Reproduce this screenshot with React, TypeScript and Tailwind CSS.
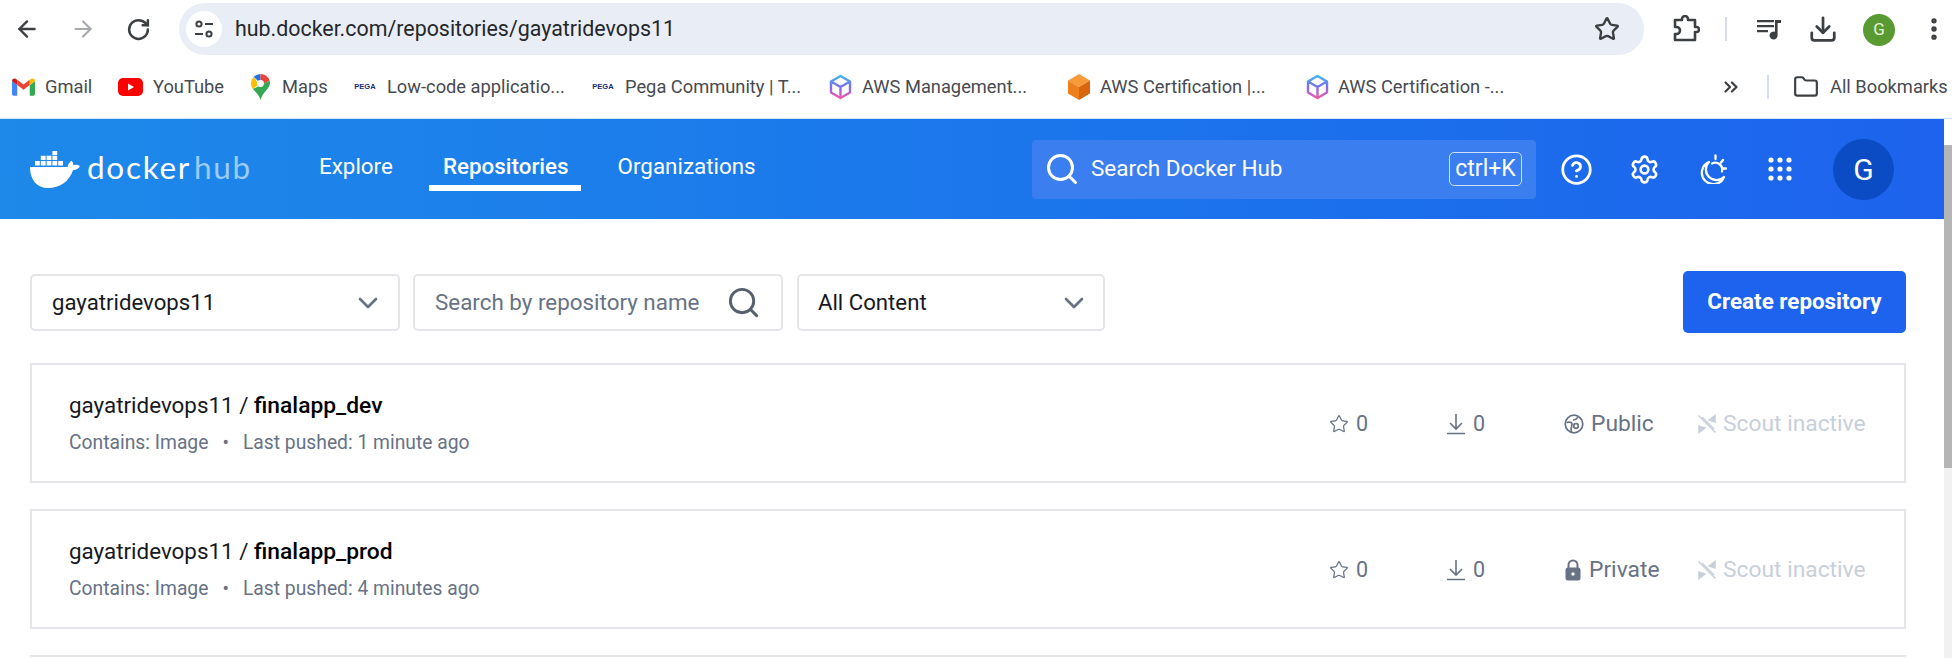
import React from "react";
import { ArrowLeft, ArrowRight, RotateCw, Star, Download, MoreVertical, ChevronDown, ChevronsRight, Folder, Search, CircleHelp, Settings } from "lucide-react";

const Gmail = () => (
  <svg width="23" height="18" viewBox="0 0 24 18" className="shrink-0">
    <path d="M1.6 18A1.6 1.6 0 0 1 0 16.4V3l5.5 3.8V18z" fill="#4285f4" />
    <path d="M18.5 18V6.8L24 3v13.4a1.6 1.6 0 0 1-1.6 1.6z" fill="#34a853" />
    <path d="M18.5 1.5 12 6.5 5.5 1.5v5.3L12 11.8l6.5-5z" fill="#ea4335" />
    <path d="M0 3V2.4C0 .4 2.3-.7 3.9.5L5.5 1.7v5.1z" fill="#c5221f" />
    <path d="M18.5 6.8V1.700L20.100.5C21.700-.7 24 .4 24 2.400V3z" fill="#fbbc04" />
  </svg>
);
const Youtube = () => (
  <svg width="25" height="18" viewBox="0 0 25 18" className="shrink-0">
    <rect width="25" height="18" rx="5" fill="#f00" />
    <path d="M10 5.500v7l6-3.500z" fill="#fff" />
  </svg>
);
const Maps = () => (
  <svg width="19" height="26" viewBox="0 0 19 26" className="shrink-0">
    <path d="M9.500 0A9.500 9.500 0 0 0 2.800 2.800L9.500 9.500z" fill="#1a73e8" />
    <path d="M9.500 0a9.500 9.500 0 0 1 9 6.500L13 9.500H9.500z" fill="#ea4335" />
    <path d="M0 9.500C0 11.500.7 13.300 1.800 15L7 11V9.500L2.800 2.800A9.500 9.500 0 0 0 0 9.500z" fill="#fbbc04" />
    <path d="M18.500 6.500c.6 1.700.6 3.500 0 5-1.600 4.500-7 7-9 14.500-.9-4.500-5.200-8.300-7.700-11L13 9.500z" fill="#34a853" />
    <circle cx="9.500" cy="9.500" r="3.400" fill="#fff" />
  </svg>
);
const Pega = () => (
  <span className="w-[24px] shrink-0 text-center text-[7.500px] font-bold leading-none text-[#1b2a6b] [font-family:'Liberation_Sans',sans-serif]">PEGA</span>
);
const Cube = ({ id }: { id: string }) => (
  <svg width="23" height="26" viewBox="0 0 23 26" className="shrink-0" fill="none">
    <defs>
      <linearGradient id={id} x1="0" y1="0" x2="0" y2="1">
        <stop offset="0" stopColor="#3fb6e8" />
        <stop offset="0.5" stopColor="#7d6cf0" />
        <stop offset="1" stopColor="#f05aa8" />
      </linearGradient>
    </defs>
    <path d="M11.500 2 21 7.500v11L11.500 24 2 18.500v-11zM2.500 7.800l9 5.200 9-5.200M11.500 13v10.500" stroke={`url(#${id})`} strokeWidth="2.400" strokeLinejoin="round" />
  </svg>
);
const OrangeCube = () => (
  <svg width="24" height="26" viewBox="0 0 24 26" className="shrink-0">
    <path d="M12 0 23 6.500 12 13 1 6.500z" fill="#f79a3a" />
    <path d="M1 6.500 12 13v13L1 19.500z" fill="#ee7f1d" />
    <path d="M23 6.500 12 13v13l11-6.500z" fill="#d9660f" />
  </svg>
);
const Tune = () => (
  <svg width="20" height="20" viewBox="0 0 20 20" fill="none" stroke="#3c4043" strokeWidth="2">
    <circle cx="5" cy="5" r="2.600" />
    <path d="M11 5h8M1 15h8" />
    <circle cx="15" cy="15" r="2.600" />
  </svg>
);
const Puzzle = () => (
  <svg width="28" height="28" viewBox="0 0 28 28" fill="none" stroke="#3c4043" strokeWidth="2.600" strokeLinejoin="round">
    <path d="M3 5h7V4a3 3 0 0 1 6 0v1h7v7h1.500a2.500 2.500 0 0 1 0 5H23v8H3v-6h1.500a3.500 3.500 0 0 0 0-7H3z" />
  </svg>
);
const Media = () => (
  <svg width="26" height="24" viewBox="0 0 26 24" fill="#3c4043">
    <path d="M1 3h17v2.200H1zM1 8h17v2.200H1zM1 13h11v2.200H1zM19 3h6v3h-3.400v12.500a4 4 0 1 1-2.600-3.700z" />
  </svg>
);
const Whale = () => (
  <svg width="50" height="37" viewBox="0 0 50 37" fill="#fff" className="shrink-0">
    <path d="M0 16h37.500c.5-3 2-5 4.300-6.300 1 1.500 1.600 3 1.600 4.500 2.200-.8 4.500-.5 6.600.8-1.300 2.700-3.700 4-7 4.200C39.500 30 30 37 18 37 7 37 0 29 0 16z" />
    <path d="M5 10h4.800v4.500H5zM10.800 10h4.800v4.500h-4.800zM16.600 10h4.800v4.500h-4.800zM22.400 10h4.800v4.500h-4.800zM28.200 10H33v4.500h-4.800zM10.800 4.800h4.800v4.300h-4.800zM16.600 4.800h4.800v4.300h-4.800zM22.400 4.800h4.800v4.300h-4.800zM22.400 0h4.800v3.900h-4.800z" />
  </svg>
);
const Moon = () => (
  <svg width="30" height="30" viewBox="0 0 30 30" fill="none" stroke="#fff" strokeWidth="2.300" strokeLinecap="round" strokeLinejoin="round">
    <path d="M12 8A11.500 11.500 0 1 0 27 23 10 10 0 0 1 12 8z" />
    <path d="M15 9.500A7 7 0 0 1 25 17.500" />
    <path d="M18.500 1.500v3.500M26 6l-2 2.500M26.500 14.500h2.500" />
  </svg>
);
const Dots = () => (
  <svg width="24" height="24" viewBox="0 0 24 24" fill="#fff">
    {[3, 12, 21].map((y) => [3, 12, 21].map((x) => <circle key={`${x}-${y}`} cx={x} cy={y} r="2.600" />))}
  </svg>
);
const Globe = () => (
  <svg width="20" height="20" viewBox="0 0 20 20" fill="none" stroke="#677285" strokeWidth="1.700">
    <circle cx="10" cy="10" r="8.800" />
    <path d="M2.500 8.500c2.500-.5 5-.5 5.500 1 .5 2-2 4-.5 8.500M14 2.500c-1 2.500-3 3.500-5 3.500" />
    <circle cx="12" cy="12" r="2.300" />
  </svg>
);
const ScoutOff = () => (
  <svg width="20" height="20" viewBox="0 0 20 20" fill="#c8cfda" stroke="#c8cfda" strokeWidth="1.500">
    <path d="M1.500 1.500 18.500 18.500" fill="none" />
    <path d="M5 3 17 15" fill="none" />
    <path d="M12 6l6-4.500V8z" />
    <path d="M8 14l-6 4.500V12z" />
  </svg>
);
const LockIcon = () => (
  <svg width="18" height="22" viewBox="0 0 18 22">
    <path d="M4.500 10V6a4.500 4.500 0 0 1 9 0v4" fill="none" stroke="#677285" strokeWidth="2" />
    <rect x="1.500" y="8.500" width="15" height="13" rx="2.500" fill="#677285" />
    <circle cx="9" cy="15" r="1.700" fill="#fff" />
  </svg>
);

const bookmarkText = "text-[18.300px] whitespace-nowrap text-[#474a4f]";

const Card = ({ name, when, visibility }: { name: string; when: string; visibility: "Public" | "Private" }) => (
  <div className="flex h-[120px] items-center border-2 border-[#e3e5e8] bg-white pl-[37px]">
    <div className="flex w-[1260px] flex-col gap-[16px]">
      <div className="text-[22.400px] leading-[22px] text-[#17191e]">
        gayatridevops11 / <span className="text-[22.800px] font-medium text-black">{name}</span>
      </div>
      <div className="flex text-[19.300px] leading-[20px] text-[#677285]">
        <span>Contains: Image</span>
        <span className="mx-[14px]">•</span>
        <span>Last pushed: {when}</span>
      </div>
    </div>
    <div className="flex w-[117px] items-center gap-[7px] pt-[2px] text-[#677285]">
      <Star size={20} strokeWidth={1.500} />
      <span className="text-[21.500px]">0</span>
    </div>
    <div className="flex w-[118px] items-center gap-[7px] pt-[2px] text-[#677285]">
      <svg width="20" height="22" viewBox="0 0 20 22" fill="none" stroke="#677285" strokeWidth="1.600"><path d="M10 1v14M4 10l6 6 6-6M1 20.500h18" /></svg>
      <span className="text-[21.500px]">0</span>
    </div>
    <div className="flex w-[133px] items-center gap-[7px] pt-[2px] text-[22.800px] text-[#677285]">
      {visibility === "Public" ? <Globe /> : <LockIcon />}
      <span>{visibility}</span>
    </div>
    <div className="flex items-center gap-[6px] pt-[2px] text-[22.800px] whitespace-nowrap text-[#c8cfda]">
      <ScoutOff />
      <span>Scout inactive</span>
    </div>
  </div>
);

export default function App() {
  return (
    <div className="flex h-[658px] w-[1952px] flex-col overflow-hidden bg-white [font-family:Roboto,sans-serif]">
      <div className="flex h-[60px] items-center pb-[2px]">
        <div className="flex w-[179px] items-center pl-[14px] text-[#3c4043]">
          <ArrowLeft size={26} strokeWidth={2.200} />
          <ArrowRight size={26} strokeWidth={2} className="ml-[30px] text-[#a6a9ad]" />
          <RotateCw size={25} strokeWidth={2.400} className="ml-[30px]" />
        </div>
        <div className="flex h-[52px] w-[1465px] items-center rounded-full bg-[#e9edf6] pl-[7px] pr-[24px]">
          <div className="flex h-[36px] w-[36px] items-center justify-center rounded-full bg-white"><Tune /></div>
          <span className="ml-[13px] flex-1 text-[21.400px] text-[#25272b]">hub.docker.com/repositories/gayatridevops11</span>
          <Star size={26} strokeWidth={2.200} className="text-[#3c4043]" />
        </div>
        <div className="ml-[28px] flex items-center text-[#3c4043]">
          <Puzzle />
          <div className="ml-[25px] h-[24px] w-[2px] bg-[#d3deee]" />
          <div className="ml-[29px]"><Media /></div>
          <Download size={30} strokeWidth={2.200} className="ml-[26px]" />
          <div className="ml-[25px] mt-[2px] flex h-[32px] w-[32px] items-center justify-center rounded-full bg-[#5a9a32] text-[17px] text-[#e8f3df]">G</div>
          <MoreVertical size={28} strokeWidth={2.600} className="ml-[25px]" />
        </div>
      </div>

      <div className="flex h-[59px] items-center border-b border-[#cfe4f8] pb-[4px] pl-[12px]">
        <div className="flex w-[106px] items-center gap-[10px]"><Gmail /><span className={bookmarkText}>Gmail</span></div>
        <div className="flex w-[133px] items-center gap-[10px]"><Youtube /><span className={bookmarkText}>YouTube</span></div>
        <div className="flex w-[102px] items-center gap-[12px]"><Maps /><span className={bookmarkText}>Maps</span></div>
        <div className="flex w-[238px] items-center gap-[10px]"><Pega /><span className={bookmarkText}>Low-code applicatio...</span></div>
        <div className="flex w-[238px] items-center gap-[10px]"><Pega /><span className={bookmarkText}>Pega Community | T...</span></div>
        <div className="flex w-[238px] items-center gap-[10px]"><Cube id="cubeA" /><span className={bookmarkText}>AWS Management...</span></div>
        <div className="flex w-[239px] items-center gap-[9px]"><OrangeCube /><span className={bookmarkText}>AWS Certification |...</span></div>
        <div className="flex w-[414px] items-center gap-[9px]"><Cube id="cubeB" /><span className={bookmarkText}>AWS Certification -...</span></div>
        <ChevronsRight size={22} strokeWidth={2.400} className="text-[#3c4043]" />
        <div className="ml-[25px] h-[24px] w-[2px] bg-[#d3deee]" />
        <Folder size={26} strokeWidth={2} className="ml-[24px] text-[#3c4043]" />
        <span className={`ml-[11px] ${bookmarkText}`}>All Bookmarks</span>
      </div>

      <div className="flex min-h-0 flex-1">
        <div className="flex min-w-0 flex-1 flex-col">
          <div className="flex h-[100px] items-center bg-gradient-to-r from-[#1e89e9] to-[#1d63ed] pl-[30px] text-white">
            <div className="flex w-[289px] items-center">
              <Whale />
              <div className="mb-[3px] ml-[7px] flex items-baseline text-[31.500px] tracking-[1.700px] [font-family:Lato,sans-serif]">
                <span>docker</span><span className="ml-[3px] text-[#9ccbf6]">hub</span>
              </div>
            </div>
            <nav className="flex h-[100px] items-start text-[22.400px]">
              <span className="mt-[31px]">Explore</span>
              <span className="relative ml-[50px] mt-[31px] font-medium">
                Repositories
                <span className="absolute -left-[14px] -right-[12px] top-[35px] h-[6px] bg-white" />
              </span>
              <span className="ml-[49px] mt-[31px]">Organizations</span>
            </nav>
            <div className="ml-auto flex h-[59px] w-[504px] items-center rounded-[4px] bg-[#3b7ef0] pl-[12px] pr-[14px]">
              <Search size={36} strokeWidth={2} />
              <span className="ml-[11px] flex-1 text-[22.500px]">Search Docker Hub</span>
              <span className="flex h-[34px] w-[73px] items-center justify-center rounded-[5px] border border-[#cfe0fb] text-[23px]">ctrl+K</span>
            </div>
            <CircleHelp size={33} strokeWidth={2} className="ml-[24px]" />
            <Settings size={31} strokeWidth={2} className="ml-[36px]" />
            <div className="ml-[37px]"><Moon /></div>
            <div className="ml-[41px]"><Dots /></div>
            <div className="ml-[41px] mr-[50px] flex h-[61px] w-[61px] items-center justify-center rounded-full bg-[#0b4cc4] text-[30px]">G</div>
          </div>

          <main className="flex-1 pl-[30px] pr-[38px]">
            <div className="flex h-[144px] items-start pt-[52px]">
              <div className="mt-[3px] flex h-[57px] w-[370px] items-center justify-between rounded-[5px] border-2 border-[#e3e5e8] pl-[20px] pr-[14px] text-[22.200px] text-[#17191e]">
                gayatridevops11
                <ChevronDown size={32} strokeWidth={2} className="text-[#677285]" />
              </div>
              <div className="ml-[13px] mt-[3px] flex h-[57px] w-[370px] items-center justify-between rounded-[5px] border-2 border-[#e3e5e8] pl-[20px] pr-[20px] text-[22.400px] text-[#677285]">
                Search by repository name
                <Search size={35} strokeWidth={2} className="text-[#56606f]" />
              </div>
              <div className="ml-[14px] mt-[3px] flex h-[57px] w-[308px] items-center justify-between rounded-[5px] border-2 border-[#e3e5e8] pl-[19px] pr-[13px] text-[22.200px] text-[#17191e]">
                All Content
                <ChevronDown size={32} strokeWidth={2} className="text-[#677285]" />
              </div>
              <button className="ml-auto h-[62px] w-[223px] rounded-[5px] bg-[#1d63ed] text-[22.400px] font-bold text-white">Create repository</button>
            </div>
            <div className="flex flex-col gap-[26px]">
              <Card name="finalapp_dev" when="1 minute ago" visibility="Public" />
              <Card name="finalapp_prod" when="4 minutes ago" visibility="Private" />
              <div className="h-[10px] border-t-2 border-[#e3e5e8]" />
            </div>
          </main>
        </div>
        <div className="flex w-[8px] flex-col bg-[#f1f1f1]">
          <div className="h-[26px] bg-white" />
          <div className="h-[323px] bg-[#b5b5b5]" />
        </div>
      </div>
    </div>
  );
}
